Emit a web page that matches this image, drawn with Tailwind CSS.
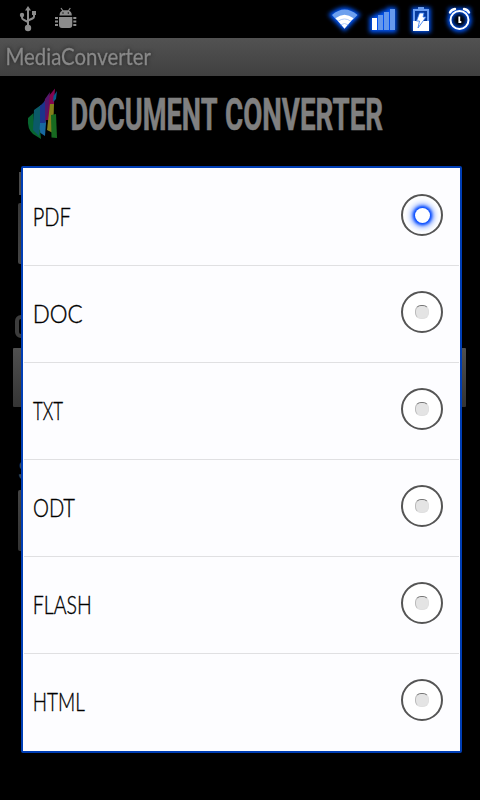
<!DOCTYPE html>
<html lang="en">
<head>
<meta charset="utf-8">
<title>MediaConverter</title>
<script src="https://cdn.jsdelivr.net/npm/@tailwindcss/browser@4"></script>
</head>
<body class="bg-black">
<div class="relative w-[480px] h-[800px] overflow-hidden bg-black font-['Lato',sans-serif]">
  <!-- status bar -->
  <div class="h-[38px] flex items-start">
    <svg class="w-[160px] h-[38px]" viewBox="0 0 160 38" fill="#8c8c8c" stroke="none">
      <path d="M28 6l3 4.500h-6z"/><circle cx="28" cy="28" r="3.200"/><circle cx="22" cy="15" r="2.200"/><path d="M32 11h4v4h-4z"/>
      <path d="M28 9V27M22 15v2.500q0 1.500 1.500 2.200L28 22M34 14v2.500q0 1.300-1.500 2L28 20.500" fill="none" stroke="#8c8c8c" stroke-width="2"/>
      <path d="M59.500 15.500q0-4.500 3.800-5.300h4.700q3.800.8 3.800 5.300z"/>
      <path d="M61 8l2 3M70.300 8l-2 3" stroke="#8c8c8c" stroke-width="1.200" fill="none"/>
      <circle cx="63" cy="13" r=".7" fill="#000"/><circle cx="68.300" cy="13" r=".7" fill="#000"/>
      <path d="M59 17h13.300v8q0 3-3 3h-7.300q-3 0-3-3z"/>
      <path d="M55 17h3v2h-3zM55 20.500h3v2h-3zM55 24h3v2h-3zM73.300 17h3v2h-3zM73.300 20.500h3v2h-3zM73.300 24h3v2h-3z"/>
    </svg>
    <svg class="w-[160px] h-[38px] ml-auto" viewBox="320 0 160 38">
      <defs>
        <filter id="glow" x="-50%" y="-50%" width="200%" height="200%"><feGaussianBlur stdDeviation="2.300"/></filter>
      </defs>
      <g filter="url(#glow)" fill="#0050f0" stroke="#0058ff" stroke-width="5">
        <path d="M332 15q12.500-10 25 0L344.500 28z"/>
        <path d="M371 18h5v-3h6v-3h6V9h7v22h-24z" stroke-width="3"/>
        <path d="M413 9h16v22h-16z" stroke-width="3"/>
        <path d="M449 12l4-3M470 12l-4-3" fill="none"/><circle cx="459.500" cy="20" r="9.500" fill="none"/>
      </g>
      <path d="M332 15q12.500-11 25.500 0l-5 5q-8-6-16 0z" fill="#6da0ee"/>
      <path d="M335.500 18.200q9-7 18 0l-9 10.600z" fill="#fff"/>
      <path d="M338 21.300q6.500-4.700 13 0M340.800 24.800q3.700-2.600 7.400 0" fill="none" stroke="#b4cdf8" stroke-width="1"/>
      <path d="M372 18h5v12h-5z" fill="#fff"/>
      <path d="M378 15h5v15h-5zM384 12h5v18h-5zM390 9h5v21h-5z" fill="#6598ec"/>
      <path d="M414 10h14v20h-14z" fill="#063a9c" stroke="#6a9df0" stroke-width="2"/>
      <path d="M418 7h6v2.500h-6z" fill="#6a9df0"/>
      <path d="M413 21h16v10h-16z" fill="#fff"/>
      <path d="M419.500 13h4.500l-1 4h3L418 28l1.500-7h-3z" fill="#fff" stroke="#3478ef" stroke-width=".8"/>
      <g fill="none" stroke="#fff" stroke-linecap="round">
        <circle cx="459.500" cy="20" r="9" stroke-width="2"/>
        <path d="M450 12.500q1.500-3 5-3.500M469 12.500q-1.500-3-5-3.500" stroke-width="2.400"/>
        <path d="M459.300 16.500V22h2" stroke-width="1.800" stroke-linecap="butt"/>
      </g>
    </svg>
  </div>
  <!-- title bar -->
  <div class="h-[38px] bg-linear-to-b from-[#525252] to-[#404040]">
    <svg class="w-[200px] h-[38px] drop-shadow-[0_0_2px_#222]" viewBox="0 0 200 38">
      <text x="5.500" y="26.500" font-size="23.500" fill="#888" stroke="#888" stroke-width=".3" textLength="145.500" lengthAdjust="spacingAndGlyphs">MediaConverter</text>
    </svg>
  </div>
  <!-- heading -->
  <div class="h-[90px]">
    <svg class="w-[480px] h-[90px] overflow-visible" viewBox="0 76 480 90">
      <path d="M55 88.500L44 102l-3 18h8l5-16z" fill="#83054f"/>
      <path d="M57 91l-3.500 5-.5 6 3-3z" fill="#07598c"/>
      <path d="M43 104l-8 6-2 18 12 8 1-13z" fill="#1768a0"/>
      <path d="M33.500 113l-5.500 5q-1 11 5 16l8 5-1-9-6-5z" fill="#08652f"/>
      <path d="M34 110l7-5-1 18-1 13-6-6z" fill="#0b5a68"/>
      <path d="M45 99l5-7-2 20-3 11h-5z" fill="#55166b"/>
      <path d="M40 106l5-5v22h-5z" fill="#1b348c"/>
      <path d="M50 104h4l-1 29-6-3z" fill="#84801b"/>
      <path d="M51 115l5-1 1 24-5.500-.5z" fill="#176a20"/>
      <g font-family="Roboto, sans-serif" font-weight="700" font-size="45" fill="#808080" stroke="#808080" stroke-width=".6">
        <text x="70.500" y="130" textLength="147" lengthAdjust="spacingAndGlyphs">DOCUMENT</text>
        <text x="225" y="130" textLength="158" lengthAdjust="spacingAndGlyphs">CONVERTER</text>
      </g>
    </svg>
  </div>
  <!-- dimmed form behind the dialog -->
  <div class="px-[18px] pt-[6px] font-['Roboto',sans-serif] text-[#4a4a4a] font-bold">
    <div class="h-[31px]"><div class="w-[4px] ml-px h-[23px] bg-[#4a4a4a]"></div></div>
    <div class="h-[61px] rounded-[2px] bg-linear-to-b from-[#383838] to-[#444]"></div>
    <div class="h-[84px] pt-[51px]"><div class="-ml-[3px] w-[16px] h-[23px] border-[4px] border-[#3c3c3c] rounded-[6px]"></div></div>
    <div class="-mx-[5px] w-[453px] h-[59px] rounded-[1px] bg-linear-to-b from-[#505050] to-[#343434]"></div>
    <div class="h-[83px] pt-[50px] text-[30px] leading-[28px]">S</div>
    <div class="h-[61px] rounded-[2px] bg-linear-to-b from-[#444] to-[#333]"></div>
  </div>
  <!-- format dialog -->
  <div class="absolute left-[21px] top-[166px] w-[441px] h-[587px] border-2 border-[#003eb5] rounded-[2px] bg-[#fdfdff] px-px pt-px">
    <div class="h-[97px] flex justify-between border-b border-[#e0e0e2] pt-[25px] pr-[16px]">
      <svg class="w-[100px] h-[42px]" viewBox="24 0 100 42"><text x="32.800" y="32" font-size="26" font-weight="300" stroke="#000" stroke-width=".4" textLength="38" lengthAdjust="spacingAndGlyphs">PDF</text></svg>
      <div class="size-[42px] rounded-full border-2 border-[#555] bg-white flex items-center justify-center"><div class="size-[15px] rounded-full bg-white shadow-[0_0_3px_2px_#0047ff,0_0_7px_3px_#3971ff]"></div></div>
    </div>
    <div class="h-[97px] flex justify-between border-b border-[#e0e0e2] pt-[25px] pr-[16px]">
      <svg class="w-[100px] h-[42px]" viewBox="24 0 100 42"><text x="32.800" y="32" font-size="26" font-weight="300" stroke="#000" stroke-width=".4" textLength="50" lengthAdjust="spacingAndGlyphs">DOC</text></svg>
      <div class="size-[42px] rounded-full border-2 border-[#555] bg-white flex items-center justify-center"><div class="size-[14px] rounded-[6px] bg-[#e4e4e4] border border-[#e0e0e0] border-t-[#777] border-l-[#bbb]"></div></div>
    </div>
    <div class="h-[97px] flex justify-between border-b border-[#e0e0e2] pt-[25px] pr-[16px]">
      <svg class="w-[100px] h-[42px]" viewBox="24 0 100 42"><text x="33" y="32" font-size="26" font-weight="300" stroke="#000" stroke-width=".4" textLength="30" lengthAdjust="spacingAndGlyphs">TXT</text></svg>
      <div class="size-[42px] rounded-full border-2 border-[#555] bg-white flex items-center justify-center"><div class="size-[14px] rounded-[6px] bg-[#e4e4e4] border border-[#e0e0e0] border-t-[#777] border-l-[#bbb]"></div></div>
    </div>
    <div class="h-[97px] flex justify-between border-b border-[#e0e0e2] pt-[25px] pr-[16px]">
      <svg class="w-[100px] h-[42px]" viewBox="24 0 100 42"><text x="33" y="32" font-size="26" font-weight="300" stroke="#000" stroke-width=".4" textLength="42" lengthAdjust="spacingAndGlyphs">ODT</text></svg>
      <div class="size-[42px] rounded-full border-2 border-[#555] bg-white flex items-center justify-center"><div class="size-[14px] rounded-[6px] bg-[#e4e4e4] border border-[#e0e0e0] border-t-[#777] border-l-[#bbb]"></div></div>
    </div>
    <div class="h-[97px] flex justify-between border-b border-[#e0e0e2] pt-[25px] pr-[16px]">
      <svg class="w-[100px] h-[42px]" viewBox="24 0 100 42"><text x="32.800" y="32" font-size="26" font-weight="300" stroke="#000" stroke-width=".4" textLength="59" lengthAdjust="spacingAndGlyphs">FLASH</text></svg>
      <div class="size-[42px] rounded-full border-2 border-[#555] bg-white flex items-center justify-center"><div class="size-[14px] rounded-[6px] bg-[#e4e4e4] border border-[#e0e0e0] border-t-[#777] border-l-[#bbb]"></div></div>
    </div>
    <div class="h-[97px] flex justify-between pt-[25px] pr-[16px]">
      <svg class="w-[100px] h-[42px]" viewBox="24 0 100 42"><text x="32.800" y="32" font-size="26" font-weight="300" stroke="#000" stroke-width=".4" textLength="52" lengthAdjust="spacingAndGlyphs">HTML</text></svg>
      <div class="size-[42px] rounded-full border-2 border-[#555] bg-white flex items-center justify-center"><div class="size-[14px] rounded-[6px] bg-[#e4e4e4] border border-[#e0e0e0] border-t-[#777] border-l-[#bbb]"></div></div>
    </div>
  </div>
</div>
</body>
</html>
